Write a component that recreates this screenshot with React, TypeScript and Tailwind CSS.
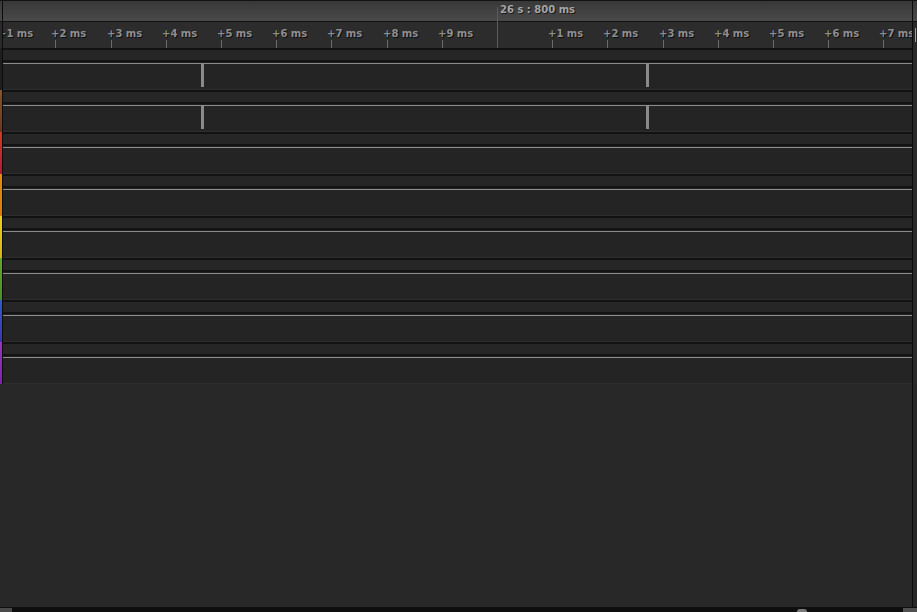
import React from "react";

const font = { fontFamily: '"DejaVu Sans", sans-serif' };

const STEP = 55.2;
const CENTER = 497;
const MAIN_LEFT = 3;

const ticks = Array.from({ length: 17 }, (_, i) => i - 9)
  .filter((k) => k !== 0)
  .map((k) => ({
    x: k === -9 ? 2 : Math.round(CENTER + STEP * k),
    label: `+${k < 0 ? k + 10 : k} ms`,
  }));

const tracks = [
  { color: "bg-[#1e1e1e]", markers: [201, 646] },
  { color: "bg-gradient-to-b from-[#8a5226] to-[#6a3a1c]", markers: [201, 646] },
  { color: "bg-gradient-to-b from-[#d23a1e] to-[#b01a34]", markers: [] },
  { color: "bg-gradient-to-b from-[#e2900e] to-[#dc7a0c]", markers: [] },
  { color: "bg-gradient-to-b from-[#ecd21c] to-[#d6b414]", markers: [] },
  { color: "bg-gradient-to-b from-[#62a82e] to-[#4c9028]", markers: [] },
  { color: "bg-gradient-to-b from-[#2f5cc8] to-[#3a36b0]", markers: [] },
  { color: "bg-gradient-to-b from-[#9a34c0] to-[#7a24b0]", markers: [] },
];

const Track = ({ color, markers }: { color: string; markers: number[] }) => (
  <div className="flex h-[42px]">
    <div className={`w-[2px] ${color}`} />
    <div className="w-px bg-[#0c0c0c]" />
    <div className="relative flex flex-1 flex-col">
      <div className="h-[2px] bg-[#121212]" />
      <div className="h-[10px] bg-[#262626]" />
      <div className="h-[2px] bg-[#131313]" />
      <div className="h-px bg-[#202020]" />
      <div className="h-px bg-[#8c8c8c]" />
      <div className="flex-1 bg-[#242424]" />
      <div className="h-px bg-[#2e2e2e]" />
      {markers.map((m) => (
        <div
          key={m}
          className="absolute top-[16px] h-[23px] w-[3px] bg-[#8a8a8a]"
          style={{ left: m - MAIN_LEFT }}
        />
      ))}
    </div>
    <div className="w-px bg-[#0c0c0c]" />
    <div className="w-[4px] bg-[#2a2a2a]" />
  </div>
);

const App = () => {
  return (
    <div className="relative flex h-[612px] w-[917px] flex-col overflow-hidden bg-[#282828]" style={font}>
      {/* header */}
      <div className="flex h-[22px] border-y border-[#121212] bg-gradient-to-b from-[#383838] to-[#4a4a4a]">
        <div className="w-[2px]" />
        <div className="w-px bg-[#0c0c0c]" />
        <div className="relative flex-1">
          <span className="absolute left-[497px] top-[1px] text-[10px] font-bold leading-[16px] text-[#a4a4a4] [text-shadow:1px_1px_0_#1a1a1a]">
            26 s : 800 ms
          </span>
        </div>
        <div className="w-px bg-[#0c0c0c]" />
        <div className="w-[4px]" />
      </div>

      {/* ruler */}
      <div className="flex h-[26px] bg-[#2c2c2c]">
        <div className="w-[2px] bg-[#2a2a2a]" />
        <div className="w-px bg-[#0c0c0c]" />
        <div className="relative flex-1 overflow-hidden">
          {ticks.map((t) => (
            <React.Fragment key={t.x}>
              <span
                className="absolute top-[5px] whitespace-nowrap text-[10px] font-bold leading-[14px] text-[#8e8e8e] [text-shadow:1px_1px_0_#0e0e0e]"
                style={{ left: t.x - MAIN_LEFT - 4 }}
              >
                {t.label}
              </span>
              <div
                className="absolute top-[18px] h-[8px] w-px bg-[#6a6a6a]"
                style={{ left: t.x - MAIN_LEFT }}
              />
            </React.Fragment>
          ))}
        </div>
        <div className="w-px bg-[#0c0c0c]" />
        <div className="relative w-[4px] bg-[#2a2a2a]">
          <div className="absolute left-[2px] top-[6px] h-[14px] w-px bg-[#a0a0a0]" />
        </div>
      </div>

      {/* center marker line */}
      <div className="absolute left-[497px] top-[7px] h-[41px] w-px bg-[#5c5c5c]" />

      {tracks.map((t, i) => (
        <Track key={i} color={t.color} markers={t.markers} />
      ))}

      {/* empty area */}
      <div className="flex flex-1">
        <div className="flex-1" />
        <div className="w-px bg-[#0c0c0c]" />
        <div className="w-[4px]" />
      </div>

      {/* bottom scrollbar */}
      <div className="relative flex h-[5px] bg-[#0e0e0e]">
        <div className="mt-[1px] w-[12px] bg-[#4a4a4a]" />
        <div className="flex-1" />
        <div className="absolute left-[797px] top-[2px] h-[6px] w-[10px] rounded-full bg-[#7a7a7a]" />
        <div className="mt-[1px] w-[14px] bg-[#505050]" />
      </div>
    </div>
  );
};

export default App;
